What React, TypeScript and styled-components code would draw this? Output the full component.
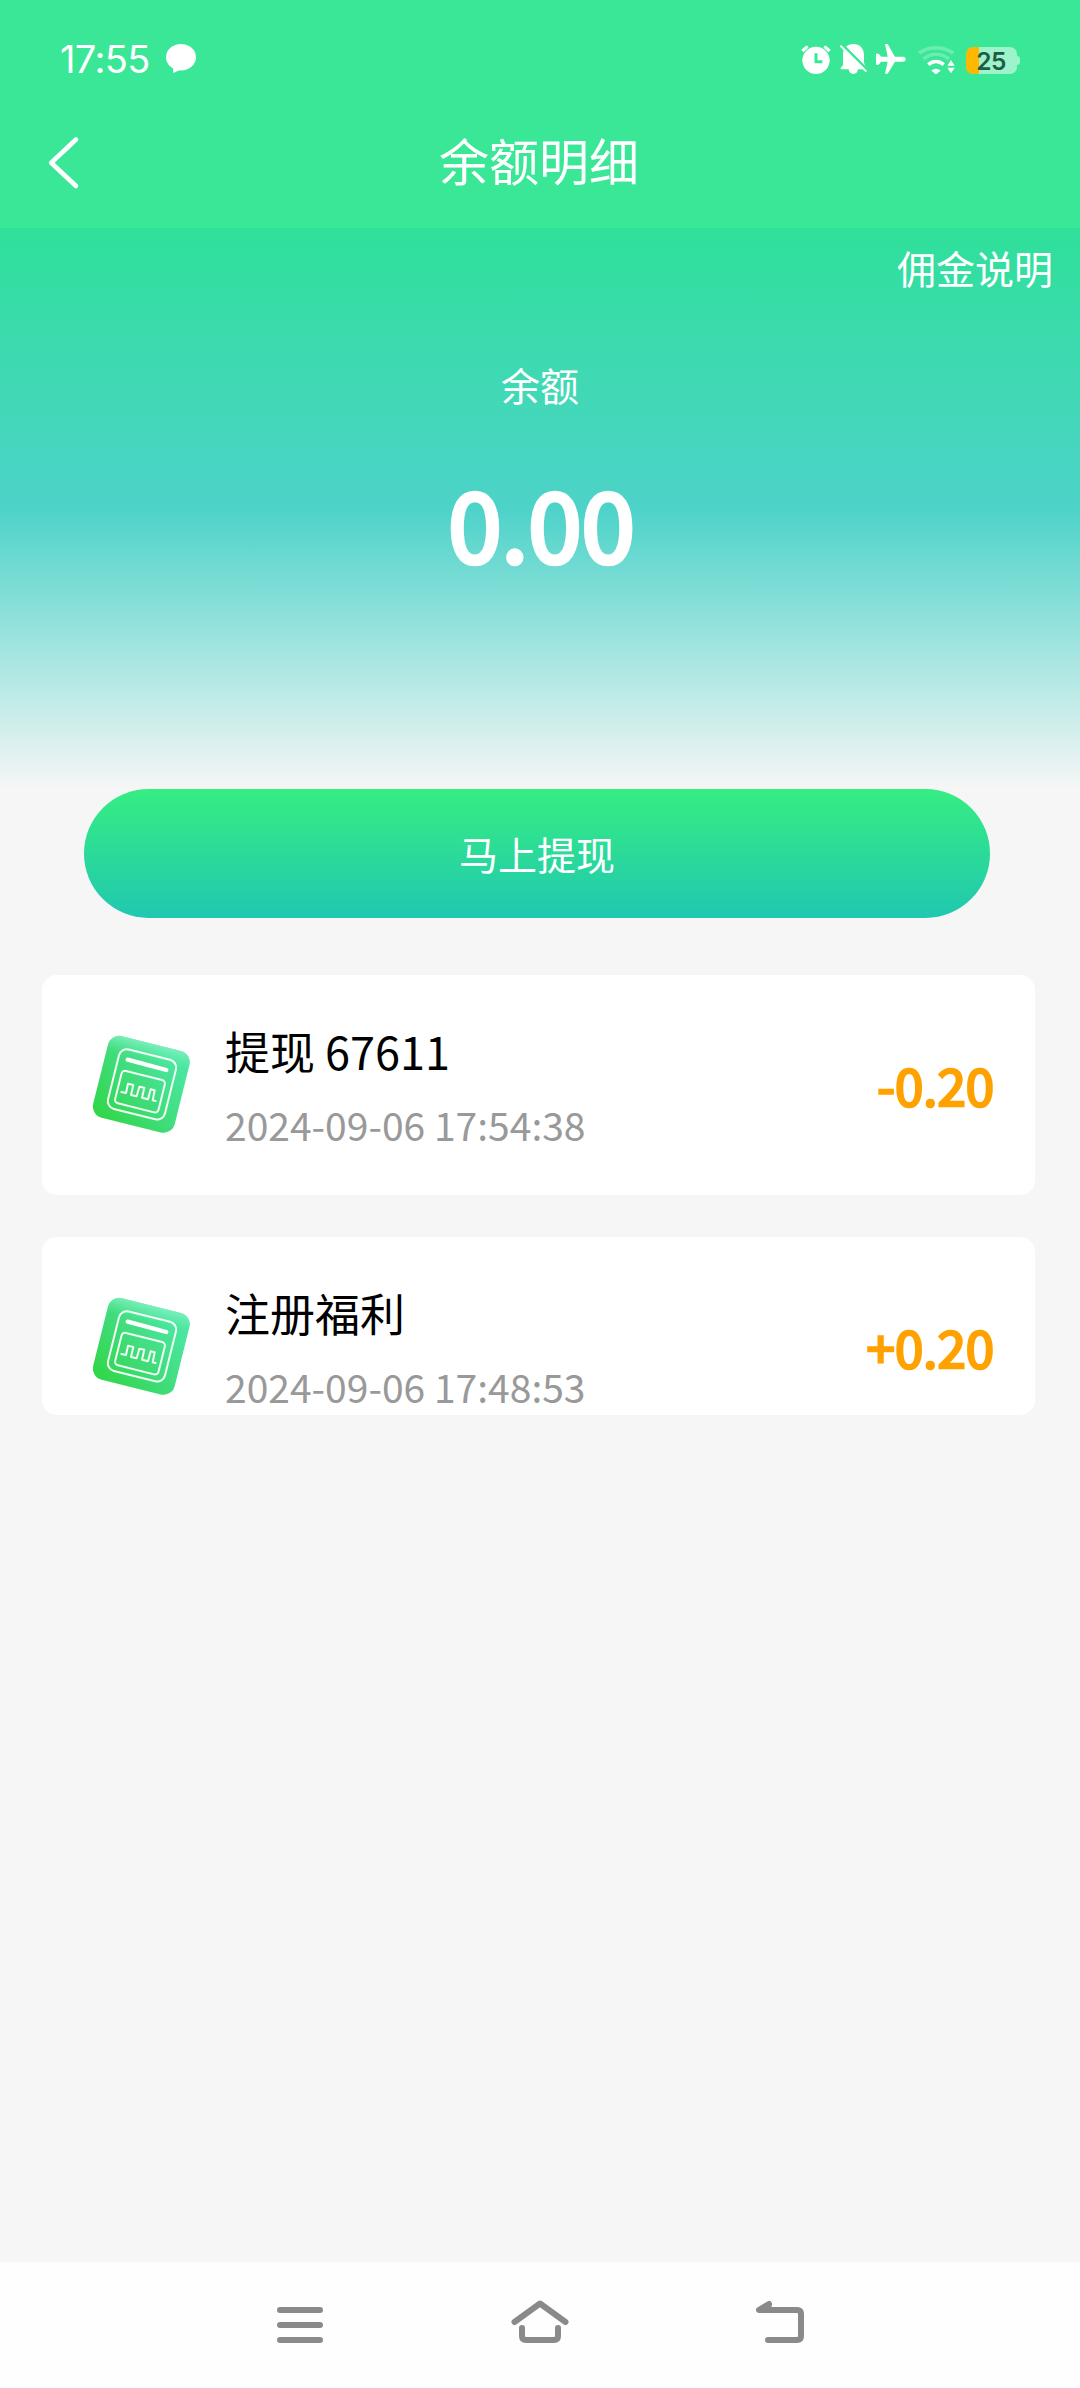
import React from "react";
import styled, { createGlobalStyle } from "styled-components";

const GlobalStyle = createGlobalStyle`
  * { box-sizing: border-box; }
  body {
    margin: 0;
    background: #f6f6f6;
    font-family: "Noto Sans CJK SC", "Noto Sans", sans-serif;
  }
  svg { display: block; }
`;

const Screen = styled.div`
  width: 1080px;
  height: 2388px;
  display: flex;
  flex-direction: column;
  background: #f6f6f6;
  overflow: hidden;
`;

const Header = styled.header`
  height: 228px;
  background: #39e796;
  color: #fff;
`;

const StatusBar = styled.div`
  height: 96px;
  padding: 42px 60px 0 60px;
  display: flex;
  justify-content: space-between;
  align-items: flex-start;
`;

const StatusGroup = styled.div`
  display: flex;
  align-items: flex-start;
`;

const Clock = styled.span`
  width: 104px;
  font-family: Inter, sans-serif;
  font-size: 38px;
  line-height: 34px;
  letter-spacing: -0.6px;
`;

const Battery = styled.div`
  position: relative;
  width: 51px;
  height: 27px;
  margin: 5px 3px 0 5px;
  padding: 1px 1px 0 0;
  border-radius: 7px;
  background: linear-gradient(90deg, #ffb800 0 13px, #9df3ca 13px);
  color: #235a45;
  font: 600 24.5px/27px Inter, sans-serif;
  letter-spacing: -0.6px;
  text-align: center;

  &::after {
    content: "";
    position: absolute;
    left: 51px;
    top: 9px;
    width: 3px;
    height: 9px;
    border-radius: 0 3px 3px 0;
    background: #9df3ca;
  }
`;

const TitleBar = styled.div`
  height: 124px;
  padding: 0 48px 0 46px;
  display: grid;
  grid-template-columns: 1fr auto 1fr;
`;

const BackButton = styled.button`
  width: 36px;
  height: 54px;
  margin-top: 40px;
  padding: 0;
  border: 0;
  background: none;
`;

const PageTitle = styled.h1`
  margin: 26px 0 0;
  font-size: 50px;
  font-weight: 400;
  line-height: 74px;
`;

const Hero = styled.section`
  height: 561px;
  display: flex;
  flex-direction: column;
  align-items: center;
  color: #fff;
  background: linear-gradient(180deg, #2fe09a 0%, #4dd3c9 50%, #f6f6f6 100%);
`;

const RulesLink = styled.a`
  align-self: flex-end;
  margin: 9px 27px 0 0;
  font-size: 39px;
  line-height: 60px;
`;

const BalanceLabel = styled.div`
  margin-top: 57px;
  font-size: 39px;
  line-height: 60px;
`;

const Balance = styled.div`
  margin: 38px 0 0 3px;
  font-size: 96px;
  line-height: 140px;
  -webkit-text-stroke: 4.6px currentColor;
`;

const WithdrawButton = styled.button`
  height: 129px;
  margin: 0 90px 0 84px;
  padding: 0 0 2px;
  flex: none;
  border: 0;
  border-radius: 65px;
  color: #fff;
  background: linear-gradient(180deg, #36ed82, #20c8b0);
  font: inherit;
  font-size: 39px;
`;

const Records = styled.main`
  flex: 1;
  padding: 57px 45px 0 42px;
  display: flex;
  flex-direction: column;
  gap: 42px;
`;

const Card = styled.article<{ $height: number }>`
  height: ${(p) => p.$height}px;
  padding: 0 41px 0 38px;
  display: flex;
  align-items: flex-start;
  background: #fff;
  border-radius: 15px;
  overflow: hidden;
`;

const CardIcon = styled.div`
  width: 120px;
  margin-top: 45px;
`;

const CardText = styled.div`
  flex: 1;
  margin: 43px 0 0 25px;
`;

const CardTitle = styled.div`
  font-size: 45px;
  line-height: 66px;
  color: #000;
`;

const CardTime = styled.div`
  margin-top: 10px;
  font-size: 39px;
  line-height: 60px;
  color: #999;
`;

const Amount = styled.div`
  margin-top: 72px;
  font-size: 51px;
  line-height: 74px;
  color: #ffa200;
  -webkit-text-stroke: 2.5px currentColor;
`;

const NavBar = styled.nav`
  height: 126px;
  display: flex;
  justify-content: center;
  align-items: center;
  gap: 180px;
  background: #fefefe;
`;

function ChatIcon() {
  return (
    <svg width="32" height="34" viewBox="164 42 32 34" fill="#fff">
      <ellipse cx="181" cy="57.2" rx="15" ry="13.2" />
      <path d="M173.2 66.5V73l8-3.5z" />
    </svg>
  );
}

function AlarmIcon() {
  return (
    <svg width="37" height="34" viewBox="60 66 111 102">
      <circle cx="108" cy="121" r="41" fill="#fff" />
      <path d="M67 93l16-14M149 93l-16-14" stroke="#fff" strokeWidth="9" />
      <path d="M108 100v25h19" fill="none" stroke="#39e796" strokeWidth="9" />
    </svg>
  );
}

function MutedBellIcon() {
  return (
    <svg width="35" height="34" viewBox="171 66 105 102">
      <path
        d="M220 72c20 0 32 14 32 32v24l3 8 4 12h-25c-1 9-6 14-14 14s-13-5-14-14h-24v-4l7-9v-31c0-19 12-32 31-32z"
        fill="#fff"
      />
      <path d="M186 73l79 79" stroke="#39e796" strokeWidth="8" />
      <path d="M181 77l78 78" stroke="#fff" strokeWidth="6" />
    </svg>
  );
}

function PlaneIcon() {
  return (
    <svg width="40" height="34" viewBox="276 66 120 102">
      <path
        d="M315 72h8l22 38h24c11 0 11 15 0 15h-24l-22 36h-8l8-36h-20l-7 9h-8v-33h8l8 9h19z"
        fill="#fff"
      />
    </svg>
  );
}

function WifiIcon() {
  return (
    <svg width="49" height="34" viewBox="396 66 147 102">
      <g fill="none" stroke="#fff" strokeWidth="11">
        <path d="M417 100c29-22 74-22 103 0" opacity=".25" />
        <path d="M430 117c23-19 54-19 77 0" opacity=".25" />
        <path d="M445 134c14-12 32-12 46 0" />
      </g>
      <path d="M454 152c8-8 20-8 28 0l-14 11z" fill="#fff" />
      <path d="M502 137l11-17 11 17zM502 143h22l-11 17z" fill="#fff" />
    </svg>
  );
}

function BackIcon() {
  return (
    <svg width="36" height="54" viewBox="46 136 36 54">
      <path
        d="M76 139.5L51.2 162.7 76 186"
        fill="none"
        stroke="#fff"
        strokeWidth="4.6"
        strokeLinecap="round"
        strokeLinejoin="round"
      />
    </svg>
  );
}

function ReceiptIcon({ id }: { id: string }) {
  const base = `${id}-base`;
  const shine = `${id}-shine`;
  return (
    <svg width="120" height="130" viewBox="0 0 360 390">
      <defs>
        <linearGradient id={base} x1="0.1" y1="0.95" x2="0.75" y2="0.1">
          <stop offset="0" stopColor="#32d74b" />
          <stop offset="0.45" stopColor="#3fdb76" />
          <stop offset="1" stopColor="#4ae69f" />
        </linearGradient>
        <linearGradient id={shine} x1="0" y1="0" x2="0" y2="1">
          <stop offset="0" stopColor="#8ff3c8" stopOpacity="0.7" />
          <stop offset="0.2" stopColor="#6fedb4" stopOpacity="0" />
        </linearGradient>
      </defs>
      <g transform="rotate(14 184 193)">
        <rect x="58" y="67" width="252" height="252" rx="35" fill={`url(#${base})`} />
        <rect x="58" y="67" width="252" height="252" rx="35" fill={`url(#${shine})`} />
      </g>
      <g fill="none" stroke="#effff4" strokeWidth="6" strokeLinejoin="round">
        <rect x="98" y="101" width="176" height="184" rx="24" transform="rotate(14 186 193)" />
        <rect x="113" y="165" width="134" height="100" rx="11" transform="rotate(14 180 215)" />
        <path
          strokeLinecap="round"
          d="M124 216l14 3 6-28 16 4-7 30 17 4 8-29 15 3-7 30 18 5 8-30 12 3-6 30 9 2"
        />
      </g>
      <path d="M143 119l116 31" stroke="#fff" strokeWidth="13" strokeLinecap="round" />
    </svg>
  );
}

const navStroke = {
  fill: "none",
  stroke: "#8a8a8a",
  strokeWidth: 6,
  strokeLinecap: "round" as const,
  strokeLinejoin: "round" as const,
};

function MenuIcon() {
  return (
    <svg width="60" height="60" viewBox="270 2295 60 60" {...navStroke}>
      <path d="M280 2310h40M280 2325h40M280 2340h40" />
    </svg>
  );
}

function HomeIcon() {
  return (
    <svg width="60" height="60" viewBox="510 2295 60 60" {...navStroke}>
      <path d="M514.500 2322L540 2303.500 565.500 2322" />
      <path d="M522 2328v8q0 4 4 4h28q4 0 4-4v-8" />
    </svg>
  );
}

function ReturnIcon() {
  return (
    <svg width="60" height="60" viewBox="750 2295 60 60" {...navStroke}>
      <path d="M769 2304l-10 6h38q4 0 4 4v22q0 4-4 4h-29" />
      <path d="M759 2310l10-6v4z" strokeWidth="5" />
    </svg>
  );
}

const records = [
  { id: "withdraw", title: "提现 67611", time: "2024-09-06 17:54:38", amount: "-0.20", height: 220 },
  { id: "signup", title: "注册福利", time: "2024-09-06 17:48:53", amount: "+0.20", height: 178 },
];

export default function App() {
  return (
    <>
      <GlobalStyle />
      <Screen>
        <Header>
          <StatusBar>
            <StatusGroup>
              <Clock>17:55</Clock>
              <ChatIcon />
            </StatusGroup>
            <StatusGroup>
              <AlarmIcon />
              <MutedBellIcon />
              <PlaneIcon />
              <WifiIcon />
              <Battery>25</Battery>
            </StatusGroup>
          </StatusBar>
          <TitleBar>
            <BackButton aria-label="返回">
              <BackIcon />
            </BackButton>
            <PageTitle>余额明细</PageTitle>
          </TitleBar>
        </Header>
        <Hero>
          <RulesLink>佣金说明</RulesLink>
          <BalanceLabel>余额</BalanceLabel>
          <Balance>0.00</Balance>
        </Hero>
        <WithdrawButton>马上提现</WithdrawButton>
        <Records>
          {records.map((r) => (
            <Card key={r.id} $height={r.height}>
              <CardIcon>
                <ReceiptIcon id={r.id} />
              </CardIcon>
              <CardText>
                <CardTitle>{r.title}</CardTitle>
                <CardTime>{r.time}</CardTime>
              </CardText>
              <Amount>{r.amount}</Amount>
            </Card>
          ))}
        </Records>
        <NavBar>
          <MenuIcon />
          <HomeIcon />
          <ReturnIcon />
        </NavBar>
      </Screen>
    </>
  );
}
